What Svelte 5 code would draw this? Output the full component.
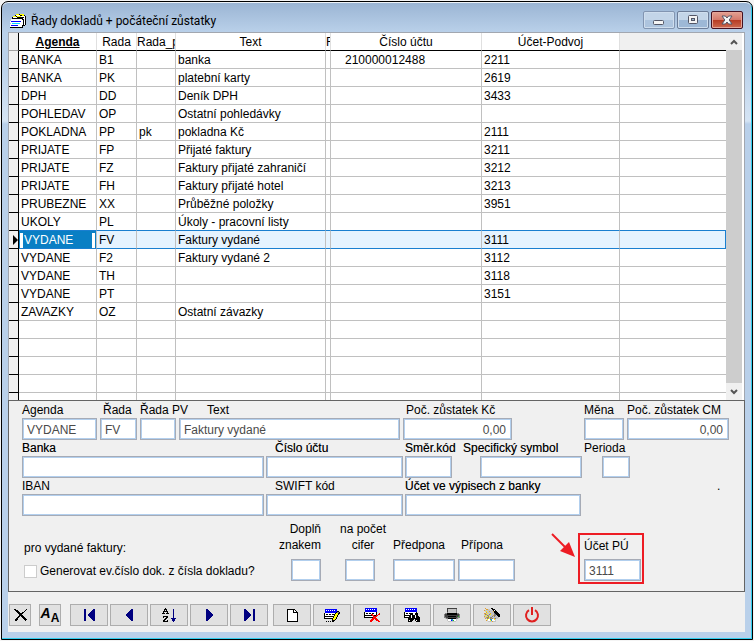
<script lang="ts">
	type Row = {
		agenda: string;
		rada: string;
		pv?: string;
		text?: string;
		cislo?: string;
		ucet?: string;
	};

	const rows: Row[] = [
		{ agenda: 'BANKA', rada: 'B1', text: 'banka', cislo: '210000012488', ucet: '2211' },
		{ agenda: 'BANKA', rada: 'PK', text: 'platební karty', ucet: '2619' },
		{ agenda: 'DPH', rada: 'DD', text: 'Deník DPH', ucet: '3433' },
		{ agenda: 'POHLEDAV', rada: 'OP', text: 'Ostatní pohledávky' },
		{ agenda: 'POKLADNA', rada: 'PP', pv: 'pk', text: 'pokladna Kč', ucet: '2111' },
		{ agenda: 'PRIJATE', rada: 'FP', text: 'Přijaté faktury', ucet: '3211' },
		{ agenda: 'PRIJATE', rada: 'FZ', text: 'Faktury přijaté zahraničí', ucet: '3212' },
		{ agenda: 'PRIJATE', rada: 'FH', text: 'Faktury přijaté hotel', ucet: '3213' },
		{ agenda: 'PRUBEZNE', rada: 'XX', text: 'Průběžné položky', ucet: '3951' },
		{ agenda: 'UKOLY', rada: 'PL', text: 'Úkoly - pracovní listy' },
		{ agenda: 'VYDANE', rada: 'FV', text: 'Faktury vydané', ucet: '3111' },
		{ agenda: 'VYDANE', rada: 'F2', text: 'Faktury vydané 2', ucet: '3112' },
		{ agenda: 'VYDANE', rada: 'TH', ucet: '3118' },
		{ agenda: 'VYDANE', rada: 'PT', ucet: '3151' },
		{ agenda: 'ZAVAZKY', rada: 'OZ', text: 'Ostatní závazky' }
	];
	const emptyRows = [0, 1, 2, 3];

	let selected = 10;
	let generate = false;

	// one character = one pixel, space = transparent
	const colors: Record<string, string> = {
		k: '#000000',
		w: '#ffffff',
		b: '#0000ff',
		n: '#000080',
		y: '#ffff00',
		c: '#00e0ff',
		r: '#ff0000',
		g: '#808080',
		l: '#c4c4c4',
		d: '#404040',
		o: '#e0a030',
		e: '#20c020',
		s: '#2090d0'
	};

	const icons: Record<string, string[]> = {
		app: [
			'      yyykyyyy  ',
			'     kwwwwkkyyk ',
			'   yyykyyyywwwwk',
			'  kwwwwkkkkkkkwk',
			'  kkkkkkkkkkkwwk',
			' wwwwwwwwwwwkkwk',
			' wwwwwwwwwwwwkwk',
			'wbbbbbbbbbbwwkwk',
			'wwwwwwwwwwwwwkwk',
			' wccccccccwwwkwk',
			'wwwwwwwwwwwwwkwk',
			'wbbbbbbbwwwwkkk ',
			'wwwwwwwwwwwwk   ',
			'kkkkkkkkkkkkk   '
		],
		close: [
			'kk          k',
			' kkk       k ',
			'  kkk     k  ',
			'   kkk  kk   ',
			'    kkkkk    ',
			'     kkk     ',
			'     kkkk    ',
			'    kk kkk   ',
			'   kk   kkk  ',
			'  kk     kkk ',
			' kkk      kkk',
			' kk        k '
		],
		first: [
			'nn       nn',
			'nn      nnn',
			'nn     nnnn',
			'nn    nnnnn',
			'nn   nnnnnn',
			'nn  nnnnnnn',
			'nn  nnnnnnn',
			'nn   nnnnnn',
			'nn    nnnnn',
			'nn     nnnn',
			'nn      nnn',
			'nn       nn'
		],
		prev: [
			'     nn',
			'    nnn',
			'   nnnn',
			'  nnnnn',
			' nnnnnn',
			'nnnnnnn',
			'nnnnnnn',
			' nnnnnn',
			'  nnnnn',
			'   nnnn',
			'    nnn',
			'     nn'
		],
		next: [
			'nn     ',
			'nnn    ',
			'nnnn   ',
			'nnnnn  ',
			'nnnnnn ',
			'nnnnnnn',
			'nnnnnnn',
			'nnnnnn ',
			'nnnnn  ',
			'nnnn   ',
			'nnn    ',
			'nn     '
		],
		last: [
			'nn       nn',
			'nnn      nn',
			'nnnn     nn',
			'nnnnn    nn',
			'nnnnnn   nn',
			'nnnnnnn  nn',
			'nnnnnnn  nn',
			'nnnnnn   nn',
			'nnnnn    nn',
			'nnnn     nn',
			'nnn      nn',
			'nn       nn'
		],
		sort: [
			'   k          ',
			'  kkk      n  ',
			'  k k      n  ',
			' kkkkk     n  ',
			' k   k     n  ',
			'kkk kkk    n  ',
			'           n  ',
			'           n  ',
			' kkkkk     n  ',
			' k  kk     n  ',
			'   kk    nnnnn',
			'  kk      nnn ',
			' kk  k    nnn ',
			' kkkkk     n  '
		],
		blank: [
			'kkkkkkkk   ',
			'kwwwwwkwk  ',
			'kwwwwwkwwk ',
			'kwwwwwkkkkk',
			'kwwwwwwwwwk',
			'kwwwwwwwwwk',
			'kwwwwwwwwwk',
			'kwwwwwwwwwk',
			'kwwwwwwwwwk',
			'kwwwwwwwwwk',
			'kwwwwwwwwwk',
			'kwwwwwwwwwk',
			'kkkkkkkkkkk'
		],
		edit: [
			' bbbbbbbbbbbb   ',
			' bwbwbwbwbwbb   ',
			' bbbbbbbbbbbbkk ',
			' bbbbbbbbbbbkggk',
			'kwwwwwwwwwwkyykk',
			'kwkkwkkwkkkyyyk ',
			'kwwwwwwwwwkyyk  ',
			'kkkkkkkkkkyyyk  ',
			'kwwwwwwwwkyyk   ',
			'kkkkkkkkkyyyk   ',
			'        kyyk    ',
			'        kkk     ',
			'  k k k kk      '
		],
		remove: [
			' bbbbbbbbbbbb   ',
			' bwbwbwbwbwbb   ',
			' bbbbbbbbbbbb   ',
			' bbbbbbbbbbbb   ',
			'kwwwwwwwwwwwk   ',
			'kwkkwkkwkkwwk  r',
			'kwwwwwwrrwwwk rr',
			'kkkkkkkkrrkkrr  ',
			'kwwwwwwwwrrrr   ',
			'kkkkkkkkkrrr    ',
			'        rrrrr   ',
			'       rrr rrr  ',
			'      rrr   rrr ',
			'      rr      rr'
		],
		find: [
			' bbbbbbbbbbbb   ',
			' bwbwbwbwbwbb   ',
			' bbbbbbbbbbbb   ',
			' bbbbbbbbbbbb   ',
			'kwwwwwwwwwwwk   ',
			'kwkkwkkkkwwkkk  ',
			'kwwwwwkkkwwkkk  ',
			'kkkkkkkwkkkwkk  ',
			'kwwwwkkwkkkwkkk ',
			'kkkkkkkwkkkwkkkk',
			'    kkkkkkkkkkkk',
			'    kkkkkk kkkkk',
			'    kwkkk  kwkkk',
			'    kkkk    kkkk'
		],
		print: [
			'   dddddddddd   ',
			'   dllllllllg   ',
			'   dllllllllg   ',
			'   dllllllllg   ',
			'   gllllllllg   ',
			' ggkkkkkkkkkkgg ',
			'gddkkkkkkkkkkddg',
			'gddddddddddddddg',
			'gdddkkkkkkkkddeg',
			'ggdddddddddddggg',
			' lggkkkkkkkkggl ',
			'   lwwwsswwwl   ',
			'   lwwwbsewwl   ',
			'    llllllll    '
		],
		wizard: [
			' o     kk       ',
			'  ooll  kkk     ',
			'ollllllllkwk    ',
			' lyllolllokkk   ',
			'  olllllllkkkk  ',
			'oolyllolllgkkkk ',
			'lgollgylllggkkkk',
			'lylgollllogglkkk',
			'ollyglllglglllkk',
			'lloggygglllllll ',
			' olgolgoglogll  ',
			'   ywwsswwyl    ',
			'  olwwyswwwl    ',
			'    llllolll    '
		]
	};

	const navButtons = [
		['first', 'První'],
		['prev', 'Předchozí'],
		['sort', 'Třídit'],
		['next', 'Další'],
		['last', 'Poslední']
	];
	const editButtons = [
		['blank', 'Nový'],
		['edit', 'Upravit'],
		['remove', 'Smazat'],
		['find', 'Hledat'],
		['print', 'Tisk'],
		['wizard', 'Průvodce tiskem']
	];
</script>

{#snippet sprite(name: string)}
	<svg
		width={icons[name][0].length}
		height={icons[name].length}
		viewBox="0 0 {icons[name][0].length} {icons[name].length}"
		shape-rendering="crispEdges"
		aria-hidden="true"
	>
		{#each icons[name] as line, y}
			{#each line.split('') as ch, x}
				{#if ch !== ' '}
					<rect {x} {y} width="1" height="1" fill={colors[ch]} />
				{/if}
			{/each}
		{/each}
	</svg>
{/snippet}

<main class="window">
	<header class="titlebar">
		{@render sprite('app')}
		<h1>Řady dokladů + počáteční zůstatky</h1>
		<div class="controls">
			<button type="button" class="ctl" aria-label="Minimalizovat">
				<svg width="12" height="12" viewBox="0 0 12 12">
					<rect x="0.5" y="6.5" width="10" height="4" rx="1" fill="#f4f4f4" stroke="#535666" />
				</svg>
			</button>
			<button type="button" class="ctl strong" aria-label="Maximalizovat">
				<svg width="12" height="12" viewBox="0 0 12 12">
					<rect x="1.5" y="1.5" width="9" height="8" rx="1" fill="#f4f4f4" stroke="#535666" />
					<rect x="4.5" y="4.5" width="3" height="2" fill="#9db8d2" stroke="#535666" />
				</svg>
			</button>
			<button type="button" class="ctl quit" aria-label="Zavřít">
				<svg width="12" height="12" viewBox="0 0 12 12">
					<path
						d="M1 2H4.4L6 4L7.6 2H11L8.2 6L11 10H7.6L6 8L4.4 10H1L3.8 6Z"
						fill="#f6f6f6"
						stroke="#535666"
					/>
				</svg>
			</button>
		</div>
	</header>

	<section class="grid">
		<table>
			<colgroup>
				<col class="c-mark" />
				<col class="c-agenda" />
				<col class="c-rada" />
				<col class="c-pv" />
				<col class="c-text" />
				<col class="c-f" />
				<col class="c-cislo" />
				<col class="c-ucet" />
				<col />
			</colgroup>
			<thead>
				<tr>
					<th class="mark"></th>
					<th class="sorted">Agenda</th>
					<th>Rada</th>
					<th class="cut">Rada_pv</th>
					<th>Text</th>
					<th class="cut">F</th>
					<th>Číslo účtu</th>
					<th>Účet-Podvoj</th>
					<th class="none"></th>
				</tr>
			</thead>
			<tbody>
				{#each rows as row, i}
					<tr class:selected={i === selected} class:before={i === selected - 1} on:click={() => (selected = i)}>
						<td class="mark">
							{#if i === selected}
								<svg width="5" height="10" viewBox="0 0 5 10"><path d="M0 0L5 5L0 10Z" /></svg>
							{/if}
						</td>
						{#if i === selected}
							<td class="active"><input type="text" aria-label="Agenda" bind:value={row.agenda} /></td>
						{:else}
							<td>{row.agenda}</td>
						{/if}
						<td>{row.rada}</td>
						<td>{row.pv ?? ''}</td>
						<td>{row.text ?? ''}</td>
						<td></td>
						<td class="number">{row.cislo ?? ''}</td>
						<td>{row.ucet ?? ''}</td>
						<td class="none"></td>
					</tr>
				{/each}
				{#each emptyRows as _}
					<tr>
						<td class="mark"></td>
						<td></td><td></td><td></td><td></td><td></td><td></td><td></td>
						<td class="none"></td>
					</tr>
				{/each}
				<tr class="partial">
					<td class="mark"></td>
					<td></td><td></td><td></td><td></td><td></td><td></td><td></td>
					<td class="none"></td>
				</tr>
			</tbody>
		</table>
		<div class="scrollbar">
			<button type="button" aria-label="Nahoru">
				<svg width="8" height="6" viewBox="0 0 8 6"><path d="M1 5L4 2L7 5" /></svg>
			</button>
			<div class="thumb"></div>
			<button type="button" aria-label="Dolů">
				<svg width="8" height="6" viewBox="0 0 8 6"><path d="M1 1L4 4L7 1" /></svg>
			</button>
		</div>
	</section>

	<form class="detail" on:submit|preventDefault>
		<div class="line">
			<label class="w-agenda">Agenda<input type="text" value="VYDANE" /></label>
			<label class="w-rada"><span class="pad-s">Řada</span><input type="text" value="FV" /></label>
			<label class="w-pv">Řada PV<input type="text" /></label>
			<label class="grow"><span class="pad-l">Text</span><input type="text" value="Faktury vydané" /></label>
			<label class="w-kc"><span class="pad-s">Poč. zůstatek Kč</span><input type="text" class="amount" value="0,00" /></label>
			<label class="w-mena">Měna<input type="text" /></label>
			<label class="w-cm">Poč. zůstatek CM<input type="text" class="amount" value="0,00" /></label>
		</div>

		<div class="line bank">
			<label class="grow strong-text">Banka<input type="text" /></label>
			<label class="w-cislo strong-text"><span class="pad-m">Číslo účtu</span><input type="text" /></label>
			<label class="w-smer strong-text">Směr.kód<input type="text" /></label>
			<label class="w-spec strong-text">Specifický symbol<input type="text" /></label>
			<label class="w-perioda">Perioda<input type="text" /></label>
		</div>

		<div class="line bank">
			<label class="grow">IBAN<input type="text" /></label>
			<label class="w-cislo"><span class="pad-m">SWIFT kód</span><input type="text" /></label>
			<label class="w-vypis strong-text">Účet ve výpisech z banky<input type="text" /></label>
			<span class="dot">.</span>
		</div>

		<div class="issued">
			<div class="generate">
				<p>pro vydané faktury:</p>
				<label class="check">
					<input type="checkbox" bind:checked={generate} />
					Generovat ev.číslo dok. z čísla dokladu?
				</label>
			</div>
			<label class="w-znak">Doplň<br />znakem<input type="text" /></label>
			<label class="w-cifer">na počet<br />cifer<input type="text" /></label>
			<label class="w-pred">Předpona<input type="text" /></label>
			<label class="w-prip"><span class="pad-s">Přípona</span><input type="text" /></label>
			<div class="highlight">
				<label>Účet PÚ<input type="text" value="3111" /></label>
				<svg class="arrow" width="28" height="28" viewBox="0 0 28 28">
					<path d="M2 2L18 18" stroke="#ed1c24" stroke-width="2" />
					<path d="M25 25L10 19L19 10Z" fill="#ed1c24" />
				</svg>
			</div>
		</div>
	</form>

	<nav class="toolbar">
		<button type="button" class="small" aria-label="Storno">{@render sprite('close')}</button>
		<button type="button" class="small font" aria-label="Písmo"><i>A</i><b>A</b></button>
		<div class="group">
			{#each navButtons as [icon, title]}
				<button type="button" aria-label={title}>{@render sprite(icon)}</button>
			{/each}
		</div>
		<div class="group">
			{#each editButtons as [icon, title]}
				<button type="button" aria-label={title}>{@render sprite(icon)}</button>
			{/each}
			<button type="button" aria-label="Konec">
				<svg width="16" height="16" viewBox="0 0 16 16" fill="none" stroke="#e02020" stroke-width="2">
					<path d="M5 3.2A6 6 0 1 0 11 3.2" />
					<path d="M8 0V8" />
				</svg>
			</button>
		</div>
	</nav>
</main>

<style>
	:global(body) {
		margin: 0;
		background: #f4f4f4;
	}

	.window {
		box-sizing: border-box;
		margin: 1px;
		padding: 1px 7px 7px 6px;
		border: 1px solid #000;
		border-radius: 7px 7px 0 0;
		background: linear-gradient(#9ab4d3 0, #bad1ea 31px, #bad1ea 60px, #d5e4f4 119px, #b9d0ea 122px);
		box-shadow: inset -1px -1px 0 #30cdee, inset 0 1px 0 #eef3f8;
		font-family: 'Liberation Sans', Arial, sans-serif;
		font-size: 12px;
		color: #000;
	}

	button,
	input {
		box-sizing: border-box;
		margin: 0;
		font: inherit;
	}

	svg {
		display: block;
	}

	.titlebar {
		display: flex;
		align-items: center;
		height: 29px;
		padding: 0 2px;
		gap: 5px;
	}

	.titlebar h1 {
		flex: 1;
		margin: 0;
		padding-top: 7px;
		font: 12px/16px Roboto, 'Segoe UI', sans-serif;
	}

	.titlebar > :global(svg) {
		margin-top: 7px;
	}

	.controls {
		display: flex;
		gap: 2px;
		padding-top: 5px;
	}

	.ctl {
		display: flex;
		align-items: center;
		justify-content: center;
		width: 32px;
		height: 18px;
		padding: 0;
		border: 1px solid #8295b1;
		border-radius: 2px;
		background: linear-gradient(#c3d5e8 50%, #adc4de 50%);
		box-shadow: inset 0 0 0 1px #cfdeee;
	}

	.ctl.strong {
		border-color: #6c7d98;
		background: linear-gradient(#c3d5e8 50%, #9db8d6 50%);
	}

	.ctl.quit {
		border-color: #451020;
		background: linear-gradient(#e3a193 0, #d5786a 50%, #b63a22 50%, #cd6a50);
		box-shadow: inset 0 0 0 1px #e5a497;
	}

	.grid {
		display: flex;
		padding-right: 2px;
		border: 1px solid #a2a7b0;
		border-bottom: 0;
		background: #fff;
	}

	table {
		flex: 1;
		width: 0;
		table-layout: fixed;
		border-collapse: separate;
		border-spacing: 0;
	}

	.c-mark { width: 10px; }
	.c-agenda { width: 78px; }
	.c-rada { width: 40px; }
	.c-pv { width: 39px; }
	.c-text { width: 150px; }
	.c-f { width: 5px; }
	.c-cislo { width: 151px; }
	.c-ucet { width: 138px; }

	th,
	td {
		box-sizing: border-box;
		height: 18px;
		padding: 1px 0 0 2px;
		overflow: hidden;
		border-right: 1px solid #c0c0c0;
		border-bottom: 1px solid #c0c0c0;
		line-height: 16px;
		white-space: nowrap;
		text-align: left;
	}

	th {
		padding-left: 0;
		border-right-color: #e0e0e0;
		border-bottom-color: #000;
		font-weight: normal;
		text-align: center;
	}

	th.sorted {
		font-weight: bold;
		text-decoration: underline;
	}

	th.cut {
		text-align: left;
	}

	td.number {
		padding-left: 14px;
	}

	.mark {
		padding-left: 0;
		border-right-color: #000;
		border-bottom-color: #000;
		background: #f0f0f0;
	}

	.mark svg {
		margin-left: 4px;
	}

	th.mark {
		border-bottom-color: #a0a0a0;
	}

	.none {
		border-right: 0;
	}

	th.none {
		background: #f0f0f0;
	}

	.before td:not(.mark) {
		border-bottom-color: #1a7fd0;
	}

	.selected td:not(.mark) {
		border-bottom-color: #1a7fd0;
		background: #e5f3ff;
	}

	.selected td.none {
		border-right: 1px solid #1a7fd0;
	}

	td.active {
		padding-left: 0;
	}

	.selected td.active {
		background: #0a7fc4;
	}

	.active input {
		display: block;
		width: 75px;
		height: 15px;
		margin-left: 1px;
		padding: 0 0 0 1px;
		border: 3px solid #fff;
		border-width: 0 3px;
		background: #0a7fc4;
		color: #fff;
		outline: none;
	}

	.partial td {
		height: 7px;
		padding-top: 0;
		border-bottom: 0;
	}

	.scrollbar {
		display: flex;
		flex-direction: column;
		width: 16px;
		background: #f0f0f0;
	}

	.scrollbar button {
		display: flex;
		align-items: center;
		justify-content: center;
		height: 17px;
		padding: 0;
		border: 0;
		background: #f0f0f0;
	}

	.scrollbar path {
		fill: none;
		stroke: #555;
		stroke-width: 2;
	}

	.thumb {
		flex: 1;
		background: #cdcdcd;
	}

	.detail {
		display: flex;
		flex-direction: column;
		gap: 1px;
		padding: 2px 15px 7px 13px;
		border: 1px solid #646464;
		background: #f0f0f0;
	}

	.line {
		display: flex;
		gap: 3px;
	}

	.bank {
		gap: 2px;
	}

	label {
		display: flex;
		flex-direction: column;
		line-height: 15px;
		white-space: nowrap;
	}

	.detail input[type='text'] {
		width: 100%;
		height: 22px;
		padding: 1px 4px 0;
		border: 1px solid #a6abb6;
		border-radius: 0;
		background: #fff;
		box-shadow: inset 0 0 0 1px #b2cfee;
		color: #4a4a4a;
		outline: none;
	}

	.detail input.amount {
		padding-right: 5px;
		text-align: right;
	}

	.strong-text {
		text-shadow: 0 0 0 rgba(0, 0, 0, 0.5);
	}

	.strong-text input {
		text-shadow: none;
	}

	.grow {
		flex: 1;
		min-width: 0;
	}

	.pad-s { padding-left: 3px; }
	.pad-m { padding-left: 9px; }
	.pad-l { padding-left: 28px; }

	.w-agenda { width: 75px; }
	.w-rada { width: 37px; }
	.w-pv { width: 36px; }
	.w-kc { width: 109px; }
	.w-mena { width: 40px; margin-left: 69px; }
	.w-cm { width: 102px; }
	.w-cislo { width: 137px; }
	.w-smer { width: 47px; }
	.w-spec { width: 119px; margin-left: 9px; }
	.w-perioda { width: 46px; margin-right: 99px; }
	.w-vypis { width: 176px; }

	.detail .w-spec input {
		align-self: flex-end;
		width: 102px;
	}

	.detail .w-perioda input {
		align-self: flex-end;
		width: 28px;
	}

	.dot {
		width: 12px;
		margin-left: 134px;
	}

	.issued {
		display: flex;
		align-items: flex-end;
		padding-top: 4px;
	}

	.issued > label {
		padding-bottom: 3px;
		line-height: 16px;
	}

	.issued > label input {
		margin-top: 6px;
	}

	.generate {
		flex: 1;
		padding: 0 0 5px 2px;
		line-height: 16px;
	}

	.generate p {
		margin: 0 0 7px;
	}

	.check {
		flex-direction: row;
		align-items: center;
		gap: 3px;
		line-height: 16px;
	}

	.check input {
		appearance: none;
		width: 13px;
		height: 13px;
		border: 1px solid #ccc;
		background: #fff;
	}

	.check input:checked {
		background: #0a7fc4;
	}

	.w-znak {
		align-items: flex-end;
		width: 46px;
		margin-right: 17px;
		text-align: right;
	}

	.w-cifer {
		width: 50px;
		margin-right: 5px;
		text-align: center;
	}

	.detail .w-znak input,
	.detail .w-cifer input {
		width: 30px;
	}

	.detail .w-cifer input {
		margin-left: 7px;
	}

	.w-pred { width: 62px; margin-right: 3px; }
	.w-prip { width: 57px; margin-right: 63px; }

	.highlight {
		position: relative;
		box-sizing: border-box;
		width: 66px;
		margin-right: 85px;
		padding: 2px 1px 1px 4px;
		border: 2px solid #ed1c24;
	}

	.highlight label {
		gap: 4px;
		line-height: 18px;
	}

	.arrow {
		position: absolute;
		top: -3px;
		left: -30px;
	}

	.toolbar {
		display: flex;
		padding: 12px 1px 6px;
		background: #f0f0f0;
	}

	.toolbar button {
		display: flex;
		align-items: center;
		justify-content: center;
		width: 38px;
		height: 22px;
		padding: 0;
		border: 1px solid #adadad;
		background: #e1e1e1;
	}

	.toolbar .small {
		width: 22px;
		margin-right: 8px;
	}

	.toolbar .font {
		margin-right: 9px;
	}

	.font i {
		align-self: flex-start;
		font-size: 14px;
		font-weight: bold;
		line-height: 16px;
	}

	.font b {
		align-self: flex-end;
		line-height: 14px;
	}

	.group {
		display: flex;
		gap: 2px;
		margin-right: 5px;
	}
</style>
